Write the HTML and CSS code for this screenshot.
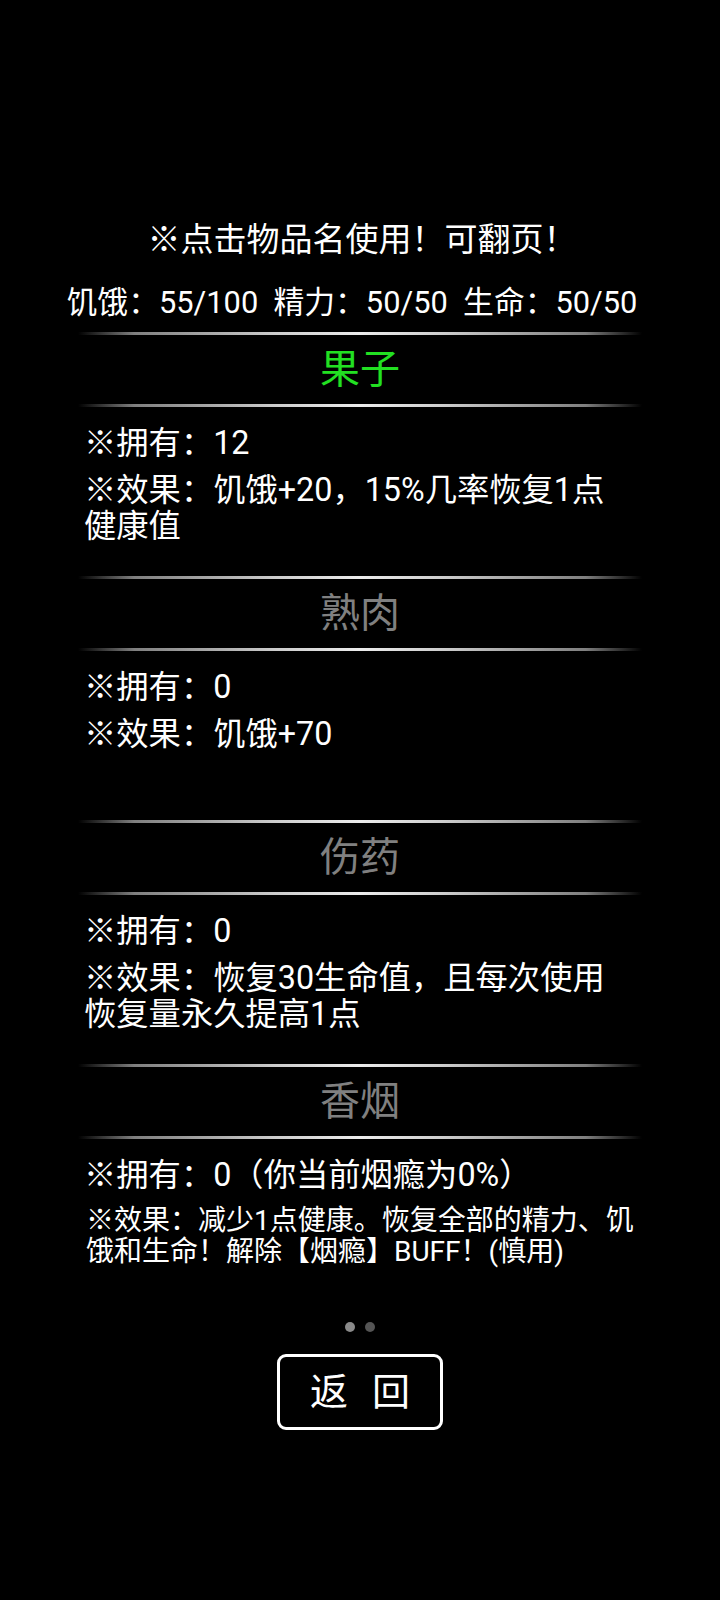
FILE: index.html
```html
<!DOCTYPE html>
<html lang="zh-CN">
<head>
<meta charset="utf-8">
<title>物品</title>
<link rel="stylesheet" href="styles.css">
</head>
<body>
<main class="page">
  <p class="hint">※点击物品名使用！可翻页！</p>
  <p class="stats">饥饿：55/100&nbsp; 精力：50/50&nbsp; 生命：50/50</p>

  <section class="items">
    <article class="item">
      <div class="rule"></div>
      <h2 class="item-name active">果子</h2>
      <div class="rule"></div>
      <div class="item-body">
        <p class="line">※拥有：12</p>
        <p class="line gap">※效果：饥饿+20，15%几率恢复1点<br>健康值</p>
      </div>
    </article>

    <article class="item">
      <div class="rule"></div>
      <h2 class="item-name">熟肉</h2>
      <div class="rule"></div>
      <div class="item-body">
        <p class="line">※拥有：0</p>
        <p class="line gap">※效果：饥饿+70</p>
      </div>
    </article>

    <article class="item">
      <div class="rule"></div>
      <h2 class="item-name">伤药</h2>
      <div class="rule"></div>
      <div class="item-body">
        <p class="line">※拥有：0</p>
        <p class="line gap">※效果：恢复30生命值，且每次使用<br>恢复量永久提高1点</p>
      </div>
    </article>

    <article class="item">
      <div class="rule"></div>
      <h2 class="item-name">香烟</h2>
      <div class="rule"></div>
      <div class="item-body">
        <p class="line">※拥有：0（你当前烟瘾为0%）</p>
        <p class="line small">※效果：减少1点健康。恢复全部的精力、饥<br>饿和生命！解除【烟瘾】BUFF！(慎用)</p>
      </div>
    </article>
  </section>

  <div class="pager">
    <span class="dot current"></span>
    <span class="dot"></span>
  </div>

  <div class="actions">
    <button class="back-btn" type="button"><span>返</span><span>回</span></button>
  </div>
</main>
</body>
</html>
```

FILE: styles.css
```css
* {
  box-sizing: border-box;
}

html,
body {
  margin: 0;
  padding: 0;
  background: #000;
}

body {
  font-family: Roboto, "Noto Sans CJK SC", sans-serif;
  color: #fff;
  width: 720px;
  min-height: 1600px;
}

.page {
  padding-top: 220px;
  display: flex;
  flex-direction: column;
}

.hint {
  margin: 0;
  font-size: 33px;
  line-height: 40px;
  text-align: center;
  padding-left: 4px;
}

.stats {
  margin: 23px 0 0;
  font-size: 30.8px;
  line-height: 40px;
  text-align: center;
  padding-right: 16px;
}

.items {
  margin-top: 9px;
  display: flex;
  flex-direction: column;
}

.item {
  height: 244px;
  display: flex;
  flex-direction: column;
}

.rule {
  height: 3px;
  margin: 0 78px;
  background: linear-gradient(to right,
    rgba(255, 255, 255, 0) 0%,
    rgba(170, 170, 170, 0.75) 10%,
    rgba(215, 215, 215, 0.95) 35%,
    #ececec 50%,
    rgba(215, 215, 215, 0.95) 65%,
    rgba(170, 170, 170, 0.75) 90%,
    rgba(255, 255, 255, 0) 100%);
}

.item-name {
  margin: 0;
  height: 69px;
  font-size: 40px;
  line-height: 69px;
  font-weight: 400;
  text-align: center;
  color: #808080;
}

.item-name.active {
  color: #22e022;
}

.item-body {
  padding: 18px 30px 0 84px;
}

.line {
  margin: 0;
  font-size: 32.3px;
  line-height: 36px;
  white-space: nowrap;
}

.line.gap {
  margin-top: 11px;
}

.line.small {
  margin-top: 12px;
  font-size: 28px;
  line-height: 31px;
  padding-left: 2px;
}

.pager {
  margin-top: 14px;
  display: flex;
  justify-content: center;
  gap: 10px;
}

.dot {
  width: 10px;
  height: 10px;
  border-radius: 50%;
  background: #555;
}

.dot.current {
  background: #8a8a8a;
}

.actions {
  margin-top: 22px;
  display: flex;
  justify-content: center;
}

.back-btn {
  width: 166px;
  height: 76px;
  border: 3px solid #fff;
  border-radius: 9px;
  background: #000;
  color: #fff;
  font-family: Roboto, "Noto Sans CJK SC", sans-serif;
  font-size: 38px;
  line-height: 1;
  display: flex;
  align-items: center;
  justify-content: center;
  gap: 24px;
  padding: 0;
}
```
